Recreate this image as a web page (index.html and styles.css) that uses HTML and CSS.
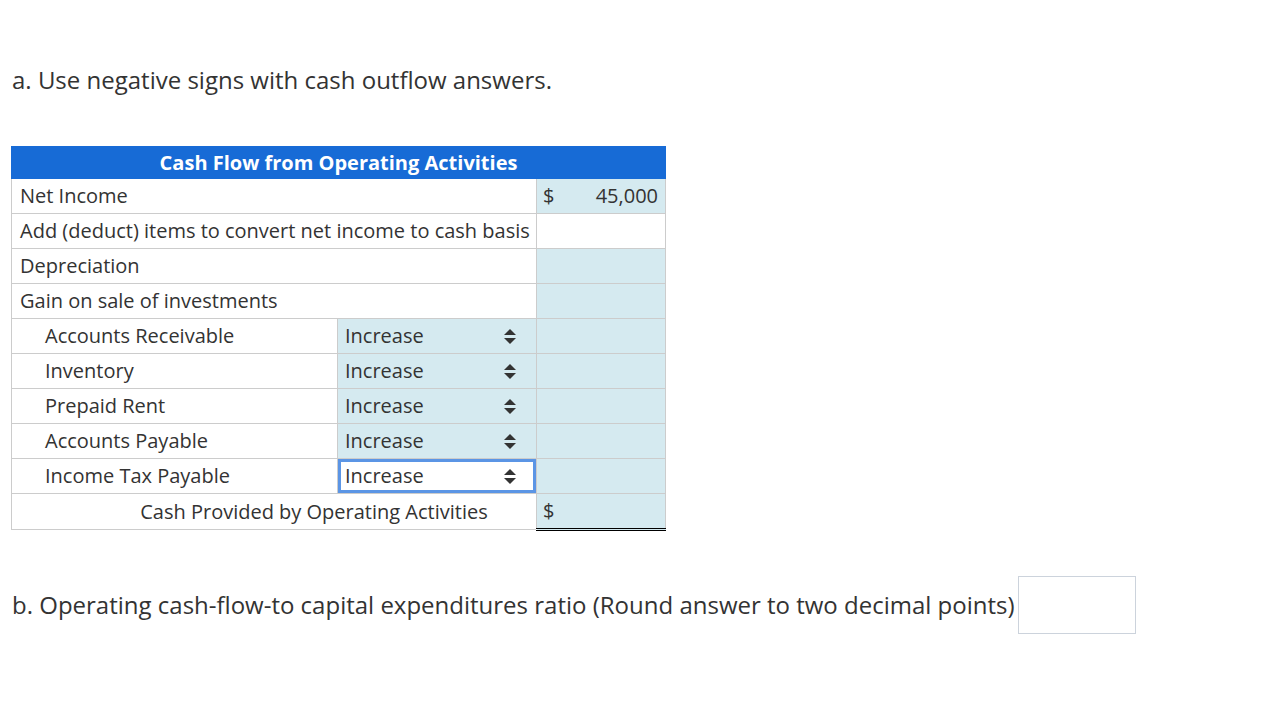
FILE: index.html
```html
<!DOCTYPE html>
<html>
<head>
<meta charset="utf-8">
<link rel="stylesheet" href="styles.css">
</head>
<body>
<div class="page">
  <p class="prompt prompt-a">a. Use negative signs with cash outflow answers.</p>
  <table class="cf">
    <colgroup><col class="c1"><col class="c2"><col class="c3"></colgroup>
    <thead>
      <tr><th colspan="3">Cash Flow from Operating Activities</th></tr>
    </thead>
    <tbody>
      <tr><td colspan="2">Net Income</td><td class="amt filled"><span class="cur">$</span><span class="val">45,000</span></td></tr>
      <tr><td colspan="2">Add (deduct) items to convert net income to cash basis</td><td class="amt"></td></tr>
      <tr><td colspan="2">Depreciation</td><td class="amt filled"></td></tr>
      <tr><td colspan="2">Gain on sale of investments</td><td class="amt filled"></td></tr>
      <tr><td class="ind">Accounts Receivable</td><td class="sel"><div class="select"><span>Increase</span><span class="arrows"></span></div></td><td class="amt filled"></td></tr>
      <tr><td class="ind">Inventory</td><td class="sel"><div class="select"><span>Increase</span><span class="arrows"></span></div></td><td class="amt filled"></td></tr>
      <tr><td class="ind">Prepaid Rent</td><td class="sel"><div class="select"><span>Increase</span><span class="arrows"></span></div></td><td class="amt filled"></td></tr>
      <tr><td class="ind">Accounts Payable</td><td class="sel"><div class="select"><span>Increase</span><span class="arrows"></span></div></td><td class="amt filled"></td></tr>
      <tr><td class="ind">Income Tax Payable</td><td class="sel focus"><div class="select"><span>Increase</span><span class="arrows"></span></div></td><td class="amt filled"></td></tr>
      <tr class="total"><td colspan="2" class="tot-label">Cash Provided by Operating Activities</td><td class="amt filled grand"><span class="cur">$</span></td></tr>
    </tbody>
  </table>
  <div class="part-b">
    <span class="prompt">b. Operating cash-flow-to capital expenditures ratio (Round answer to two decimal points)</span>
    <span class="answer-box"></span>
  </div>
</div>
</body>
</html>
```

FILE: styles.css
```css
html, body {
  margin: 0;
  padding: 0;
  background: #fff;
}
body {
  font-family: "Open Sans", "Liberation Sans", sans-serif;
  color: #333;
}
.page {
  padding: 64px 0 0 11px;
}
.prompt {
  font-size: 24px;
  line-height: 32px;
  color: #333;
  margin: 0;
}
.prompt-a {
  padding-left: 1px;
  margin-bottom: 50px;
}
.cf {
  border-collapse: collapse;
  table-layout: fixed;
  width: 654px;
  font-size: 20px;
}
.c1 { width: 326px; }
.c2 { width: 199px; }
.c3 { width: 129px; }
.cf th {
  background: #176bd6;
  color: #fff;
  font-weight: 700;
  height: 31px;
  padding: 0;
  text-align: center;
  font-size: 20px;
  line-height: 31px;
  border: 1px solid #176bd6;
}
.cf td {
  border: 1px solid #cccccc;
  height: 34px;
  padding: 0 8px;
  line-height: 24px;
  white-space: nowrap;
  color: #333;
}
.cf td.ind {
  padding-left: 33px;
}
.cf td.filled {
  background: #d5eaf0;
}
.cf td.amt {
  padding: 0 7px 0 6px;
}
.amt .cur {
  float: left;
}
.amt .val {
  float: right;
}
.cf td.sel {
  background: #d5eaf0;
  padding: 0;
}
.select {
  display: flex;
  align-items: center;
  justify-content: space-between;
  height: 34px;
  padding: 0 20px 0 7px;
  box-sizing: border-box;
}
.arrows {
  position: relative;
  width: 12px;
  height: 15px;
}
.arrows::before,
.arrows::after {
  content: "";
  position: absolute;
  left: 0;
  border-left: 6px solid transparent;
  border-right: 6px solid transparent;
}
.arrows::before {
  top: 0;
  border-bottom: 6px solid #333;
}
.arrows::after {
  bottom: 0;
  border-top: 6px solid #333;
}
.cf td.sel.focus {
  background: #fff;
}
.sel.focus .select {
  border: 3px solid #5b95e5;
  padding: 0 17px 0 4px;
  height: 34px;
}
.total .tot-label {
  text-align: center;
  padding: 0 0 0 80px;
  border-bottom: 1px solid #ccc;
}
.cf td.grand {
  border-top: 1px solid #000;
  border-bottom: 3px double #000;
  border-right: 1px solid #ccc;
}
.part-b {
  display: flex;
  align-items: center;
  margin-top: 45px;
  padding-left: 1px;
}
.answer-box {
  display: inline-block;
  width: 116px;
  height: 56px;
  border: 1px solid #ccd3dc;
  margin-left: 3px;
}
```
